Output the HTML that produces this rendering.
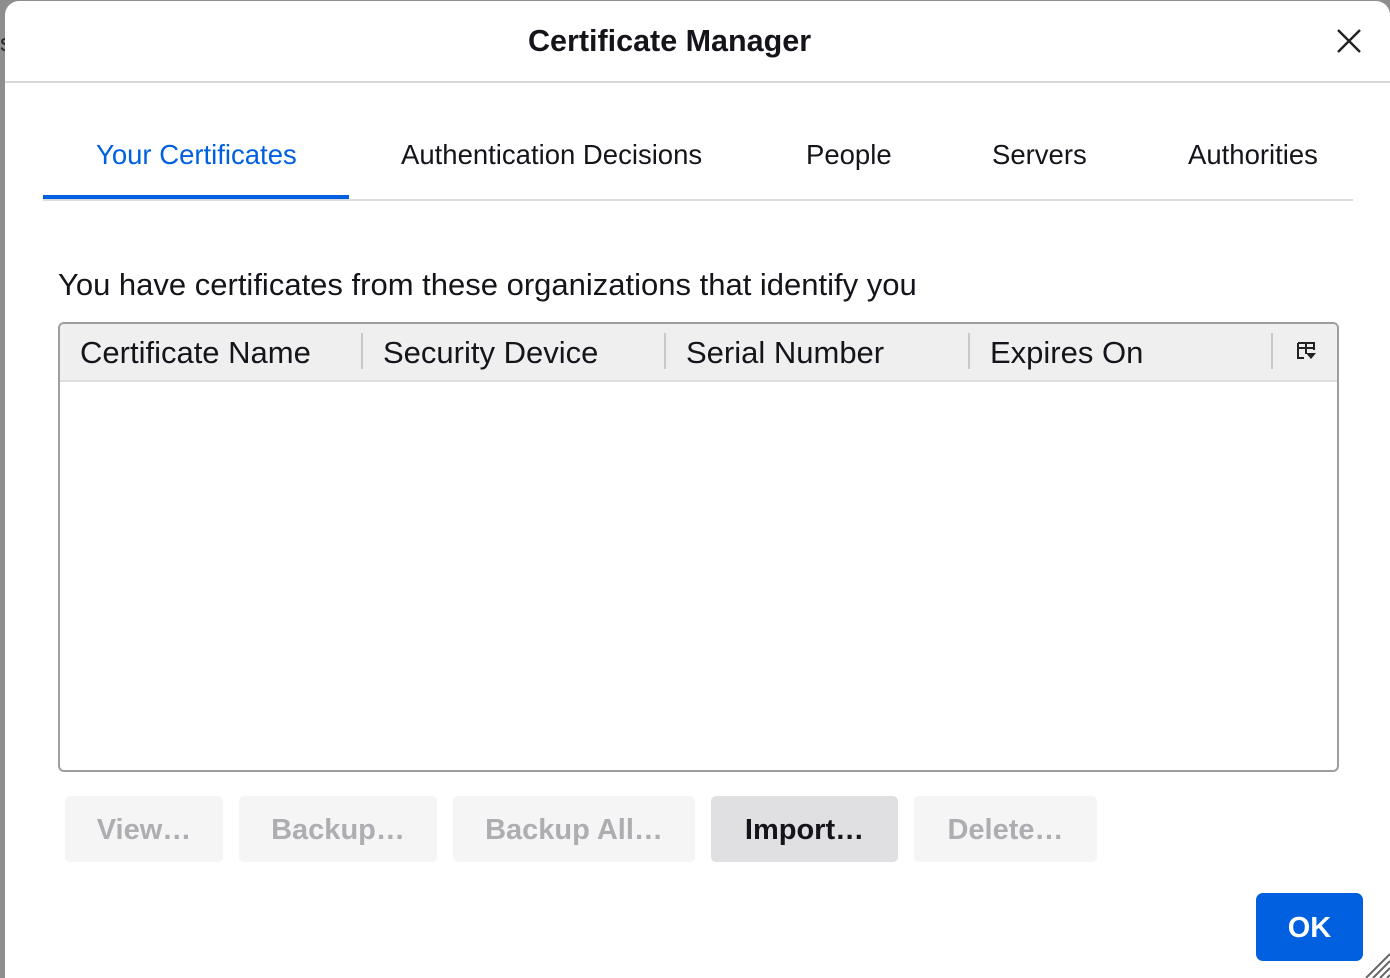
<!DOCTYPE html>
<html><head><style>
*{margin:0;padding:0;box-sizing:border-box}
html,body{width:1390px;height:978px}
body{background:#8e8e8e;position:relative;overflow:hidden;font-family:"Liberation Sans",sans-serif;color:#15141a}
.dlg{position:absolute;left:5px;top:1px;width:1385px;height:977px;background:#fff;border-radius:14px 14px 0 0}
.t{position:absolute;white-space:nowrap}
.btn{position:absolute;top:796px;height:66px;border-radius:5px;background:#f5f5f6;color:#aeaeb2;font-size:29px;font-weight:bold;text-align:center;line-height:68px}
.hd{position:absolute;top:335px;font-size:31px}
.sep{position:absolute;top:333px;width:2px;height:36px;background:#c8c8c8}
</style></head><body>
<div class="t" style="left:0;top:30px;font-size:24px;color:#222">s</div>
<div class="dlg"></div>
<div class="t" style="left:528px;top:24px;font-size:30.5px;font-weight:bold">Certificate Manager</div>
<svg style="position:absolute;left:1336px;top:28px" width="26" height="26"><path d="M2 2L24 24M24 2L2 24" stroke="#222" stroke-width="2.4"/></svg>
<div style="position:absolute;left:5px;top:81px;width:1385px;height:2px;background:#d8d8dc"></div>
<div class="t" style="left:96px;top:139px;font-size:27.5px;color:#0060df">Your Certificates</div>
<div class="t" style="left:401px;top:139px;font-size:27.5px">Authentication Decisions</div>
<div class="t" style="left:806px;top:139px;font-size:27.5px">People</div>
<div class="t" style="left:992px;top:139px;font-size:27.5px">Servers</div>
<div class="t" style="left:1188px;top:139px;font-size:27.5px">Authorities</div>
<div style="position:absolute;left:43px;top:199px;width:1310px;height:2px;background:#dcdcdf"></div>
<div style="position:absolute;left:43px;top:195px;width:306px;height:4px;background:#0060df"></div>
<div class="t" style="left:58px;top:267px;font-size:31px">You have certificates from these organizations that identify you</div>
<div style="position:absolute;left:58px;top:322px;width:1281px;height:450px;border:2px solid #9e9e9e;border-radius:6px;overflow:hidden">
<div style="height:58px;background:#efeff0;border-bottom:2px solid #dedede"></div></div>
<div class="hd" style="left:80px">Certificate Name</div>
<div class="sep" style="left:361px"></div>
<div class="hd" style="left:383px">Security Device</div>
<div class="sep" style="left:664px"></div>
<div class="hd" style="left:686px">Serial Number</div>
<div class="sep" style="left:968px"></div>
<div class="hd" style="left:990px">Expires On</div>
<div class="sep" style="left:1271px"></div>
<svg style="position:absolute;left:1297px;top:342px" width="20" height="18"><path d="M1 1H17V8M1 1V16H7M1 6H17M9 1V12" stroke="#222" stroke-width="2" fill="none"/><path d="M9 11H19L14 17Z" fill="#222"/></svg>
<div class="btn" style="left:65px;width:158px">View…</div>
<div class="btn" style="left:239px;width:198px">Backup…</div>
<div class="btn" style="left:453px;width:242px">Backup All…</div>
<div class="btn" style="left:711px;width:187px;background:#e0e0e2;color:#15141a">Import…</div>
<div class="btn" style="left:914px;width:183px">Delete…</div>
<div class="btn" style="left:1256px;top:893px;width:107px;height:68px;line-height:70px;background:#0060df;color:#fff;border-radius:7px">OK</div>
<svg style="position:absolute;left:1362px;top:950px" width="28" height="28"><path d="M4 28L28 4M11 28L28 11M18 28L28 18M25 28L28 25" stroke="#666" stroke-width="2"/></svg>
</body></html>
